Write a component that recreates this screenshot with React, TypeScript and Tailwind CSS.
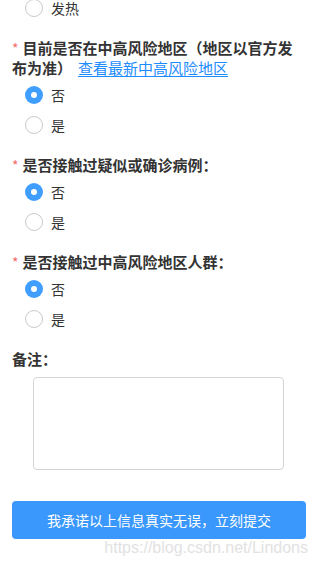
import React, { useState } from 'react';

const cjk = { fontFamily: '"Microsoft YaHei", "Noto Sans CJK SC", sans-serif' };

interface Question {
  key: string;
  title: React.ReactNode;
}

const questions: Question[] = [
  {
    key: 'area',
    title: (
      <>
        目前是否在中高风险地区（地区以官方发布为准）
        <a href="#" className="ml-[6px] font-normal text-[#1e8cff] underline underline-offset-2">
          查看最新中高风险地区
        </a>
      </>
    ),
  },
  { key: 'contact', title: '是否接触过疑似或确诊病例：' },
  { key: 'crowd', title: '是否接触过中高风险地区人群：' },
];

const Radio = ({ label, checked, onClick }: { label: string; checked: boolean; onClick: () => void }) => (
  <div className="flex h-[30px] items-center pl-[13px] cursor-pointer" onClick={onClick}>
    {checked ? (
      <span className="flex h-[18px] w-[18px] items-center justify-center rounded-full bg-[#409eff]">
        <span className="h-[6px] w-[6px] rounded-full bg-white" />
      </span>
    ) : (
      <span className="h-[18px] w-[18px] rounded-full border border-[#c8c9cc] bg-white" />
    )}
    <span className="ml-[8px] text-[14px] leading-[20px] text-[#333]">{label}</span>
  </div>
);

export default function App() {
  const [answers, setAnswers] = useState<{ [key: string]: string }>({
    area: '否',
    contact: '否',
    crowd: '否',
  });
  const [fever, setFever] = useState(false);

  return (
    <div className="min-h-[567px] overflow-hidden bg-white" style={cjk}>
      <div className="-mt-[7px] px-[12px]">
        <Radio label="发热" checked={fever} onClick={() => setFever(!fever)} />

        {questions.map((q) => (
          <div key={q.key} className="mt-[15px]">
            <div className="text-[15px] font-bold leading-[20px] text-[#333]">
              <span className="mr-[4px] text-[14px] font-normal text-[#f56c6c]">*</span>
              {q.title}
            </div>
            <div className="mt-[2px]">
              {['否', '是'].map((opt) => (
                <Radio
                  key={opt}
                  label={opt}
                  checked={answers[q.key] === opt}
                  onClick={() => setAnswers({ ...answers, [q.key]: opt })}
                />
              ))}
            </div>
          </div>
        ))}

        <div className="mt-[15px] text-[15px] font-bold leading-[20px] text-[#333]">备注：</div>
        <textarea className="mt-[8px] ml-[21px] block h-[93px] w-[251px] resize-none rounded-[4px] border border-[#d4d4d4] outline-none" />

        <button className="mt-[31px] flex h-[38px] w-full items-center justify-center rounded-[4px] bg-[#3a98fd] text-[14px] text-white">
          我承诺以上信息真实无误，立刻提交
        </button>
      </div>
      <div
        className="pr-[10px] text-right text-[16px] leading-[18px] text-[#e2e2e2]"
        style={{ fontFamily: '"Liberation Sans", Arial, sans-serif' }}
      >
        https://blog.csdn.net/Lindons
      </div>
    </div>
  );
}
